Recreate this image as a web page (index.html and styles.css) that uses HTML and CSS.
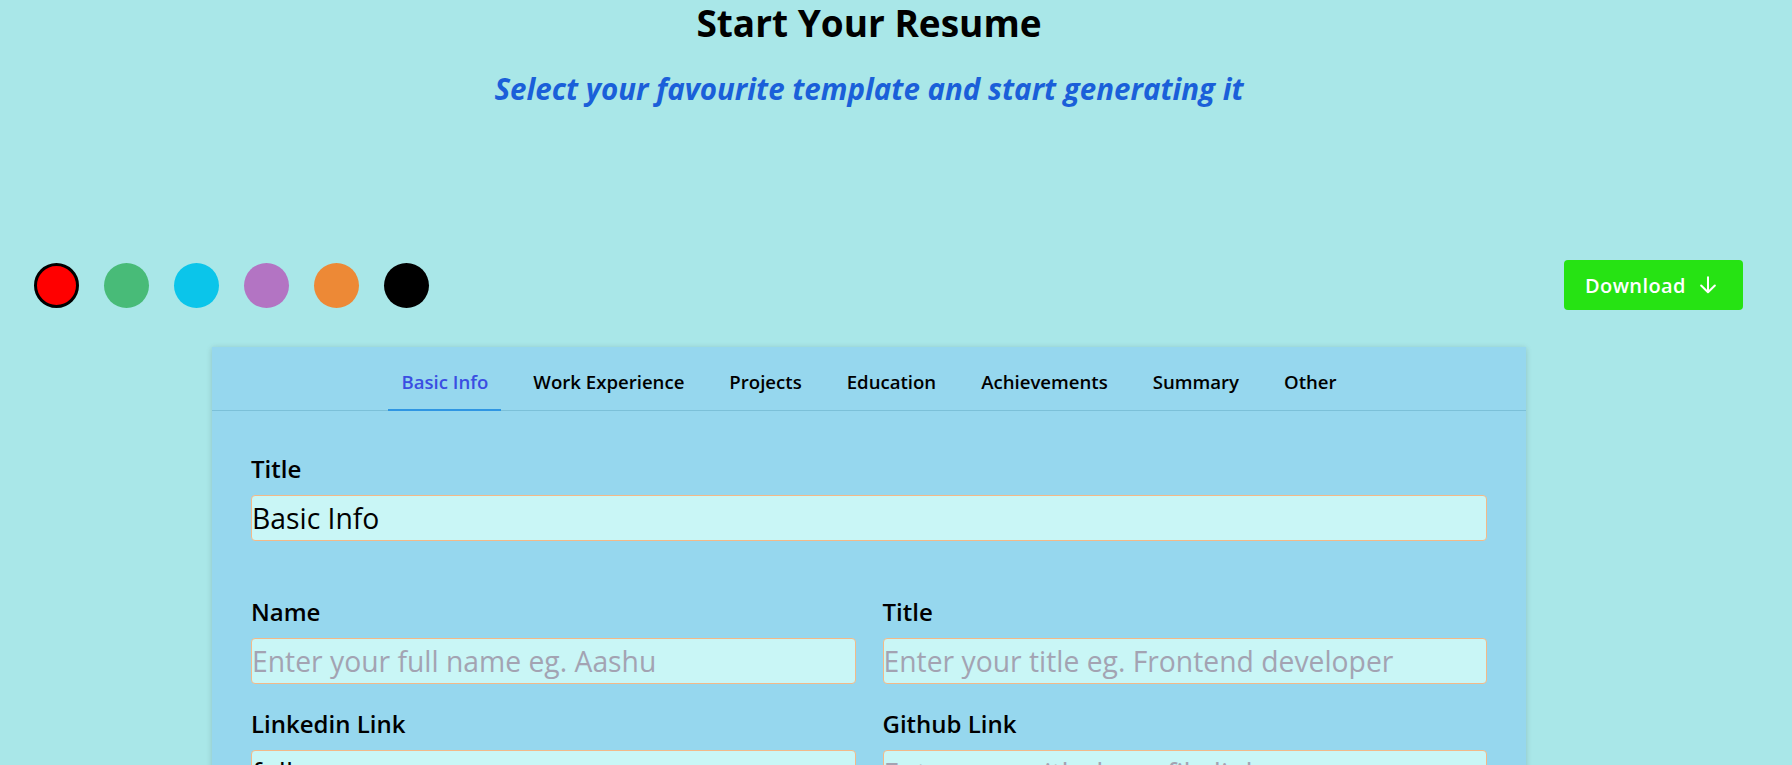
FILE: index.html
```html
<!DOCTYPE html>
<html lang="en">
<head>
<meta charset="utf-8">
<title>Start Your Resume</title>
<link rel="stylesheet" href="styles.css">
</head>
<body>
<header class="hero">
  <h1 class="hero-title">Start Your Resume</h1>
  <p class="hero-subtitle">Select your favourite template and start generating it</p>
</header>

<div class="toolbar">
  <div class="swatches">
    <span class="swatch swatch-red is-active"></span>
    <span class="swatch swatch-green"></span>
    <span class="swatch swatch-cyan"></span>
    <span class="swatch swatch-purple"></span>
    <span class="swatch swatch-orange"></span>
    <span class="swatch swatch-black"></span>
  </div>
  <button class="download-btn" type="button">
    <span>Download</span>
    <svg class="download-icon" viewBox="0 0 24 24" width="22" height="22" aria-hidden="true">
      <path d="M12 3.5V20M4.5 12.5L12 20l7.5-7.5" fill="none" stroke="#fff" stroke-width="2.2" stroke-linecap="round" stroke-linejoin="round"/>
    </svg>
  </button>
</div>

<main class="workspace">
  <section class="card">
    <nav class="tabs">
      <div class="tab is-active">Basic Info</div>
      <div class="tab">Work Experience</div>
      <div class="tab">Projects</div>
      <div class="tab">Education</div>
      <div class="tab">Achievements</div>
      <div class="tab">Summary</div>
      <div class="tab">Other</div>
    </nav>
    <div class="card-body">
      <div class="field">
        <label class="field-label">Title</label>
        <input class="field-input" type="text" value="Basic Info">
      </div>
      <div class="grid">
        <div class="field">
          <label class="field-label">Name</label>
          <input class="field-input" type="text" placeholder="Enter your full name eg. Aashu">
        </div>
        <div class="field">
          <label class="field-label">Title</label>
          <input class="field-input" type="text" placeholder="Enter your title eg. Frontend developer">
        </div>
        <div class="field">
          <label class="field-label">Linkedin Link</label>
          <input class="field-input" type="text" value="full">
        </div>
        <div class="field">
          <label class="field-label">Github Link</label>
          <input class="field-input" type="text" placeholder="Enter your github profile link">
        </div>
      </div>
    </div>
  </section>
</main>
</body>
</html>
```

FILE: styles.css
```css
* { box-sizing: border-box; }

html, body {
  margin: 0;
  padding: 0;
}

body {
  background: #a9e7e8;
  font-family: "Open Sans", "Noto Sans", sans-serif;
  color: #000;
  overflow: hidden;
}

.hero {
  padding-right: 54px;
  text-align: center;
}

.hero-title {
  margin: 0;
  font-size: 37px;
  line-height: 46px;
  font-weight: 700;
}

.hero-subtitle {
  margin: 24px 0 0;
  font-size: 29.5px;
  line-height: 38px;
  font-weight: 700;
  font-style: italic;
  color: #1a5fd9;
}

.toolbar {
  margin-top: 152px;
  height: 50px;
  padding: 0 49px 0 34px;
  display: flex;
  align-items: center;
  justify-content: space-between;
}

.swatches {
  display: flex;
  gap: 25px;
}

.swatch {
  width: 45px;
  height: 45px;
  border-radius: 50%;
  display: block;
}

.swatch-red { background: #ff0000; }
.swatch-green { background: #48bb78; }
.swatch-cyan { background: #0bc5ea; }
.swatch-purple { background: #b374c3; }
.swatch-orange { background: #ed8936; }
.swatch-black { background: #000; }
.swatch.is-active { border: 3px solid #000; }

.download-btn {
  height: 50px;
  width: 179px;
  padding: 0 24px 0 21px;
  border: none;
  border-radius: 4px;
  background: #26e313;
  color: #fff;
  font-family: inherit;
  font-size: 20px;
  font-weight: 600;
  letter-spacing: 0.4px;
  display: flex;
  align-items: center;
  justify-content: space-between;
}

.download-icon { display: block; }

.workspace {
  padding-right: 54px;
  padding-top: 37px;
}

.card {
  width: 1314px;
  margin: 0 auto;
  background: #96d7ee;
  box-shadow: 0 1px 6px rgba(0, 0, 0, 0.16);
  min-height: 500px;
}

.tabs {
  display: flex;
  justify-content: center;
  gap: 19px;
  height: 64px;
  border-bottom: 1px solid #7cc0d8;
}

.tab {
  height: 64px;
  margin-bottom: -1px;
  padding: 6px 13px 0;
  border-bottom: 2px solid transparent;
  display: flex;
  align-items: center;
  font-size: 18.6px;
  font-weight: 600;
  color: #000;
}

.tab.is-active {
  color: #3a4ee2;
  border-bottom-color: #2f96e3;
}

.card-body {
  padding: 42px 39px 0;
}

.field {
  display: flex;
  flex-direction: column;
}

.field-label {
  font-size: 24px;
  line-height: 32px;
  font-weight: 600;
  margin-bottom: 10px;
}

.field-input {
  height: 46px;
  width: 100%;
  padding: 0;
  border: 1px solid #f3b988;
  border-radius: 4px;
  background: #c9f6f6;
  font-family: inherit;
  font-size: 28.3px;
  color: #000;
  outline: none;
}

.field-input::placeholder {
  color: #a3a3b2;
}

.grid {
  margin-top: 55px;
  display: grid;
  grid-template-columns: 1fr 1fr;
  column-gap: 27px;
  row-gap: 24px;
}
```
